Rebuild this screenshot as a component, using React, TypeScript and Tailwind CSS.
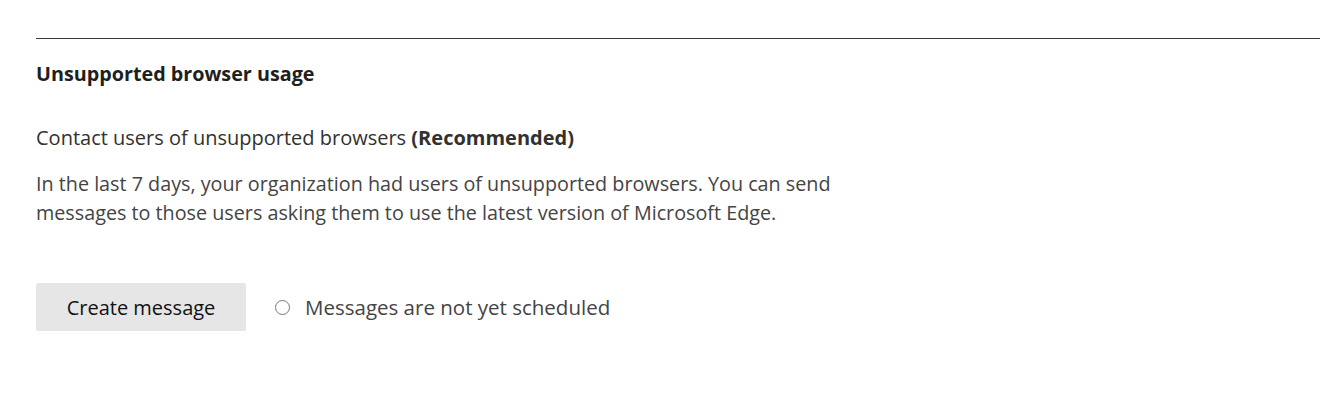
export default function App() {
  return (
    <div
      className="w-[1320px] h-[400px] bg-white pl-[36px] pt-[38px] text-[#323130]"
      style={{ fontFamily: '"Segoe UI", "Open Sans", sans-serif' }}
    >
      <div className="border-t border-[#3b3a39]" />
      <h2 className="mt-[21px] text-[19.75px] leading-[28px] font-bold text-[#201f1e]">
        Unsupported browser usage
      </h2>
      <p className="mt-[36px] text-[20px] leading-[28px] text-[#323130]">
        Contact users of unsupported browsers <span className="font-bold">(Recommended)</span>
      </p>
      <p className="mt-[17px] w-[815px] text-[19.75px] leading-[29px] text-[#444]">
        In the last 7 days, your organization had users of unsupported browsers. You can send messages to those users asking them to use the latest version of Microsoft Edge.
      </p>
      <div className="mt-[56px] flex items-center">
        <button className="h-[48px] w-[210px] rounded-[2px] bg-[#e6e6e6] pt-[1px] text-[20px] text-[#111]">
          Create message
        </button>
        <span className="ml-[29px] h-[15px] w-[15px] rounded-full border border-[#777]" />
        <span className="ml-[15px] pt-[1px] text-[20.5px] text-[#444]">Messages are not yet scheduled</span>
      </div>
    </div>
  );
}
